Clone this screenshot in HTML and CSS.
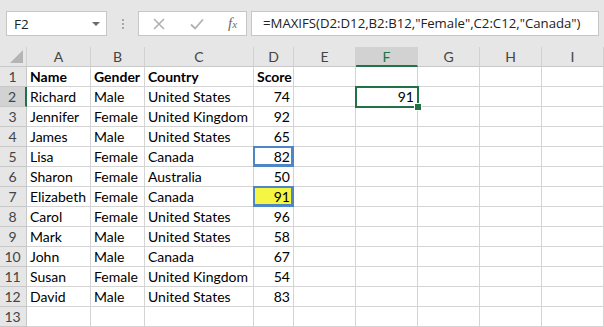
FILE: index.html
```html
<!DOCTYPE html>
<html lang="en">
<head>
    <meta charset="UTF-8">
    <title>MAXIFS</title>
    <link rel="stylesheet" href="styles.css">
</head>
<body>
    <!-- formula bar -->
    <div class="toolbar">
        <div class="name-box">
            <span>F2</span>
            <span class="drop"></span>
        </div>
        <div class="grip"><i></i><i></i><i></i></div>
        <div class="buttons">
            <svg width="12" height="12" viewBox="0 0 12 12"><path d="M1 1L11 11M11 1L1 11" stroke="#b0b0b0" stroke-width="1.6" fill="none"/></svg>
            <svg width="14" height="12" viewBox="0 0 14 12"><path d="M1 6.5L5 10.5L13 1.5" stroke="#b0b0b0" stroke-width="1.8" fill="none"/></svg>
            <span class="fx">f<small>x</small></span>
        </div>
        <div class="formula">=MAXIFS(D2:D12,B2:B12,"Female",C2:C12,"Canada")</div>
    </div>

    <!-- sheet -->
    <div class="sheet">
        <div class="hd corner"></div>
        <div class="hd">A</div><div class="hd">B</div><div class="hd">C</div><div class="hd">D</div>
        <div class="hd">E</div><div class="hd sel-col">F</div><div class="hd">G</div><div class="hd">H</div><div class="hd">I</div>

        <div class="rn">1</div>
        <div class="c b">Name</div><div class="c b">Gender</div><div class="c b">Country</div><div class="c b">Score</div>
        <div class="c"></div><div class="c"></div><div class="c"></div><div class="c"></div><div class="c"></div>

        <div class="rn sel-row">2</div>
        <div class="c">Richard</div><div class="c">Male</div><div class="c">United States</div><div class="c n">74</div>
        <div class="c"></div><div class="c n active">91</div><div class="c"></div><div class="c"></div><div class="c"></div>

        <div class="rn">3</div>
        <div class="c">Jennifer</div><div class="c">Female</div><div class="c">United Kingdom</div><div class="c n">92</div>
        <div class="c"></div><div class="c"></div><div class="c"></div><div class="c"></div><div class="c"></div>

        <div class="rn">4</div>
        <div class="c">James</div><div class="c">Male</div><div class="c">United States</div><div class="c n">65</div>
        <div class="c"></div><div class="c"></div><div class="c"></div><div class="c"></div><div class="c"></div>

        <div class="rn">5</div>
        <div class="c">Lisa</div><div class="c">Female</div><div class="c">Canada</div><div class="c n ref">82</div>
        <div class="c"></div><div class="c"></div><div class="c"></div><div class="c"></div><div class="c"></div>

        <div class="rn">6</div>
        <div class="c">Sharon</div><div class="c">Female</div><div class="c">Australia</div><div class="c n">50</div>
        <div class="c"></div><div class="c"></div><div class="c"></div><div class="c"></div><div class="c"></div>

        <div class="rn">7</div>
        <div class="c">Elizabeth</div><div class="c">Female</div><div class="c">Canada</div><div class="c n ref hl">91</div>
        <div class="c"></div><div class="c"></div><div class="c"></div><div class="c"></div><div class="c"></div>

        <div class="rn">8</div>
        <div class="c">Carol</div><div class="c">Female</div><div class="c">United States</div><div class="c n">96</div>
        <div class="c"></div><div class="c"></div><div class="c"></div><div class="c"></div><div class="c"></div>

        <div class="rn">9</div>
        <div class="c">Mark</div><div class="c">Male</div><div class="c">United States</div><div class="c n">58</div>
        <div class="c"></div><div class="c"></div><div class="c"></div><div class="c"></div><div class="c"></div>

        <div class="rn">10</div>
        <div class="c">John</div><div class="c">Male</div><div class="c">Canada</div><div class="c n">67</div>
        <div class="c"></div><div class="c"></div><div class="c"></div><div class="c"></div><div class="c"></div>

        <div class="rn">11</div>
        <div class="c">Susan</div><div class="c">Female</div><div class="c">United Kingdom</div><div class="c n">54</div>
        <div class="c"></div><div class="c"></div><div class="c"></div><div class="c"></div><div class="c"></div>

        <div class="rn">12</div>
        <div class="c">David</div><div class="c">Male</div><div class="c">United States</div><div class="c n">83</div>
        <div class="c"></div><div class="c"></div><div class="c"></div><div class="c"></div><div class="c"></div>

        <div class="rn">13</div>
        <div class="c"></div><div class="c"></div><div class="c"></div><div class="c"></div>
        <div class="c"></div><div class="c"></div><div class="c"></div><div class="c"></div><div class="c"></div>
    </div>
</body>
</html>
```

FILE: styles.css
```css
* {
    margin: 0;
    padding: 0;
    box-sizing: border-box;
}

body {
    width: 604px;
    height: 327px;
    overflow: hidden;
    background: #fff;
    font-family: 'Lato', 'Liberation Sans', sans-serif;
    font-size: 14px;
    color: #000;
}

/* formula bar */
.toolbar {
    height: 47px;
    background: #e6e6e6;
    display: flex;
    align-items: flex-start;
    padding: 11px 0 0 6px;
}

.name-box {
    width: 101px;
    height: 25px;
    background: #fff;
    border: 1px solid #c6c6c6;
    display: flex;
    align-items: center;
    justify-content: space-between;
    padding: 0 6px 0 7px;
    font-family: 'Open Sans', 'Liberation Sans', sans-serif;
    font-size: 13.5px;
    color: #222;
}

.drop {
    width: 0;
    height: 0;
    border-left: 4px solid transparent;
    border-right: 4px solid transparent;
    border-top: 4px solid #6a6a6a;
}

.grip {
    width: 31px;
    height: 25px;
    display: flex;
    flex-direction: column;
    align-items: center;
    justify-content: center;
    gap: 2px;
}

.grip i {
    width: 2px;
    height: 2px;
    background: #a8a8a8;
}

.buttons {
    width: 109px;
    height: 25px;
    background: #fff;
    border: 1px solid #c6c6c6;
    display: flex;
    align-items: center;
    padding: 0 0 0 14px;
    gap: 25px;
}

.fx {
    font-family: 'Liberation Serif', serif;
    font-style: italic;
    font-size: 15px;
    color: #6a6a6a;
    margin-left: -1px;
}

.fx small {
    font-size: 11px;
}

.formula {
    flex: 1;
    height: 25px;
    margin: 0 5px 0 4px;
    background: #fff;
    border: 1px solid #c6c6c6;
    padding: 0 0 0 11px;
    line-height: 23px;
    font-family: 'Open Sans', 'Liberation Sans', sans-serif;
    font-size: 13.2px;
    color: #222;
    white-space: nowrap;
}

/* sheet grid */
.sheet {
    display: grid;
    grid-template-columns: 27px 64px 54px 109px 40px 62px 62px 62px 62px 62px;
    grid-auto-rows: 20px;
}

.hd, .rn {
    background: #e6e6e6;
    border-right: 1px solid #c8c8c8;
    border-bottom: 1px solid #c8c8c8;
    color: #444;
    text-align: center;
    line-height: 20px;
    font-size: 14px;
}

.hd {
    border-right-color: #d2d2d2;
}

.corner {
    position: relative;
}

.corner::after {
    content: "";
    position: absolute;
    right: 3px;
    bottom: 3px;
    border-left: 13px solid transparent;
    border-bottom: 13px solid #b4b4b4;
}

.sel-col {
    background: #d2d2d2;
    border-bottom: 2px solid #217346;
    color: #217346;
}

.rn {
    padding-right: 1px;
}

.sel-row {
    background: #d2d2d2;
    border-right: 2px solid #217346;
}

.c {
    border-right: 1px solid #d4d4d4;
    border-bottom: 1px solid #d4d4d4;
    padding: 0 3px;
    line-height: 20px;
    white-space: nowrap;
}

.b {
    font-weight: bold;
}

.n {
    text-align: right;
}

.ref {
    box-shadow: inset 0 0 0 2px #4f86c6;
    border-color: #4f86c6;
    margin: -1px 0 0 -1px;
    padding: 1px 3px 0 4px;
    line-height: 19px;
}

.hl {
    background: #f5f543;
}

.active {
    position: relative;
    margin: -1px 0 0 -1px;
    border: 2px solid #217346;
    padding: 0 3px;
    line-height: 18px;
    width: 64px;
    height: 22px;
}

.active::after {
    content: "";
    position: absolute;
    right: -5px;
    bottom: -5px;
    width: 6px;
    height: 6px;
    background: #217346;
    border: 1px solid #fff;
}
```
